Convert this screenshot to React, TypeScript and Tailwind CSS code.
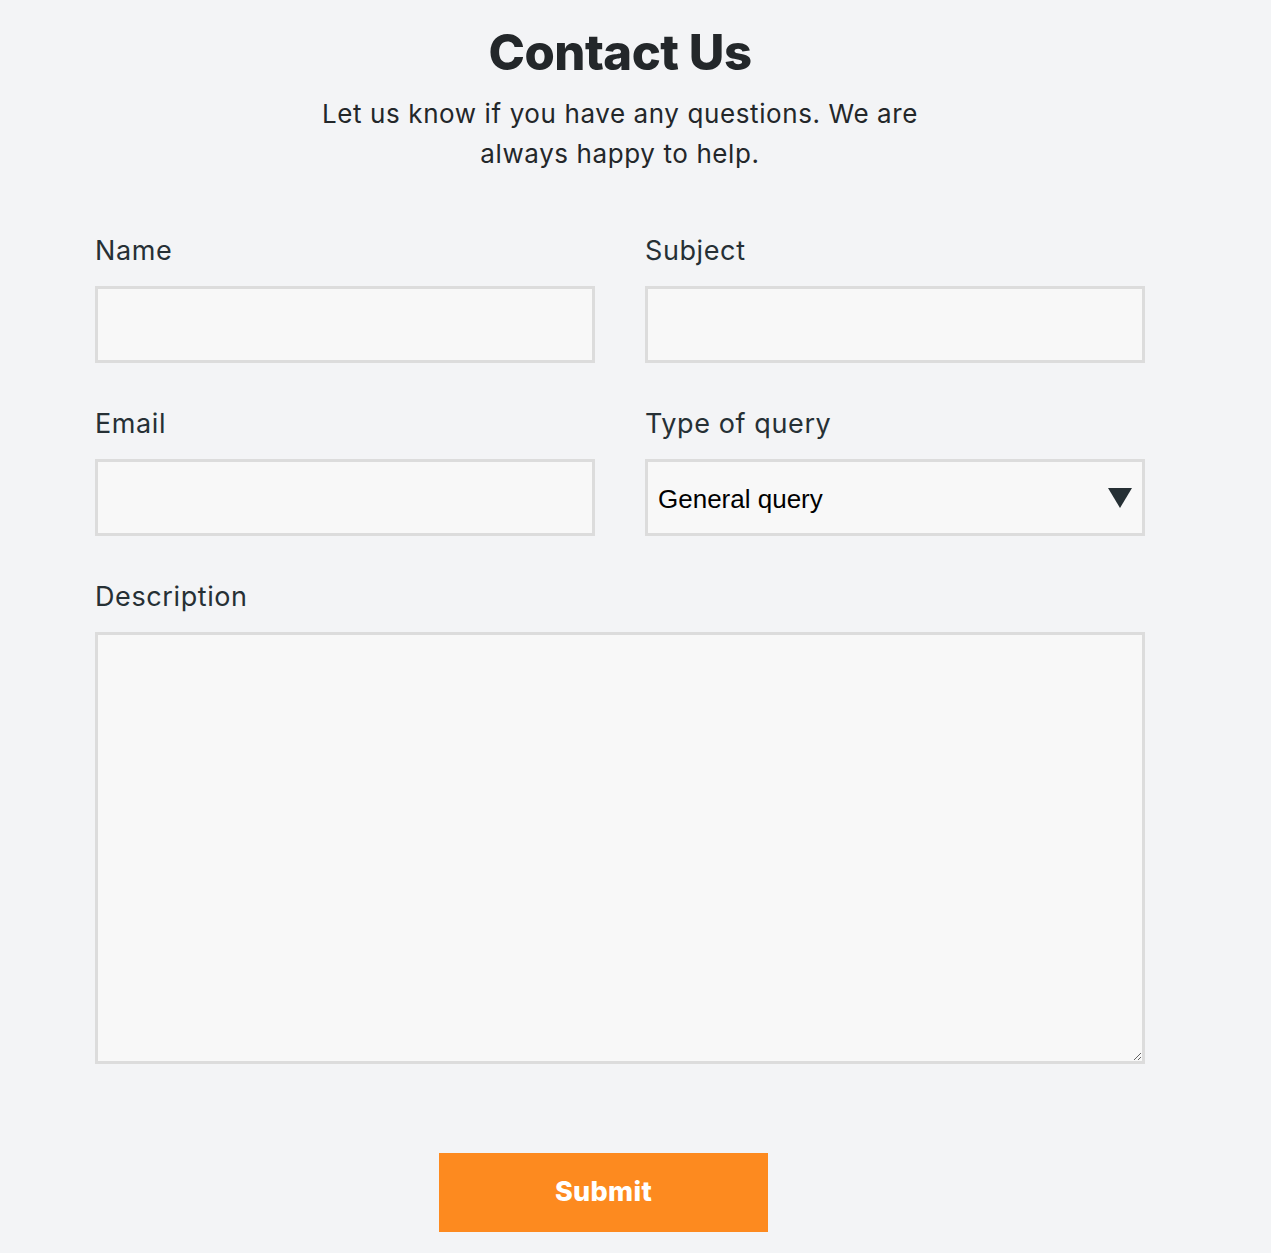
import { useState } from "react";

const QUERY_TYPES = ["General query", "Support", "Billing", "Feedback"];

function Field({ label, children }: { label: string; children: React.ReactNode }) {
  return (
    <div className="flex flex-col">
      <label className="text-[27px] leading-[36px] tracking-[0.6px] text-[#263035] mb-[17px]">{label}</label>
      {children}
    </div>
  );
}

const inputCls =
  "w-full h-[77px] bg-[#f8f8f8] border-[3px] border-[#dcdcdc] outline-none px-3 text-[24px] text-black";

export default function App() {
  const [query, setQuery] = useState(QUERY_TYPES[0]);

  return (
    <div
      className="min-h-[1253px] bg-[#f3f4f6] text-[#1f2326]"
      style={{ fontFamily: "Inter, 'Noto Sans', sans-serif" }}
    >
      <div className="w-[1050px] ml-[95px] pt-[24px]">
        {/* Heading */}
        <h1 className="text-center text-[49px] leading-[58px] font-extrabold tracking-[-0.5px] text-[#23272a]">
          Contact Us
        </h1>
        <p className="mx-auto mt-[12px] w-[640px] text-center text-[26px] leading-[40px] tracking-[0.6px] text-[#23272a]">
          Let us know if you have any questions. We are always happy to help.
        </p>

        {/* Form */}
        <form className="mt-[59px]" onSubmit={(e) => e.preventDefault()}>
          <div className="grid grid-cols-2 gap-x-[50px] gap-y-[43px]">
            <Field label="Name">
              <input className={inputCls} />
            </Field>
            <Field label="Subject">
              <input className={inputCls} />
            </Field>
            <Field label="Email">
              <input className={inputCls} />
            </Field>
            <Field label="Type of query">
              <div className="relative">
                <select
                  value={query}
                  onChange={(e) => setQuery(e.target.value)}
                  className={inputCls + " appearance-none pl-[10px] text-[26px] pt-[3px]"}
                  style={{ fontFamily: "'Liberation Sans', Arial, sans-serif" }}
                >
                  {QUERY_TYPES.map((q) => (
                    <option key={q}>{q}</option>
                  ))}
                </select>
                <svg
                  className="pointer-events-none absolute right-[12px] top-[28px]"
                  width="26"
                  height="22"
                  viewBox="0 0 26 22"
                >
                  <path d="M1 1 L25 1 L13 21 Z" fill="#263035" />
                </svg>
              </div>
            </Field>
          </div>

          <div className="mt-[43px]">
            <Field label="Description">
              <textarea className="block w-full h-[432px] bg-[#f8f8f8] border-[3px] border-[#dcdcdc] outline-none p-3 text-[24px] resize-y" />
            </Field>
          </div>

          <button
            type="submit"
            className="block mt-[89px] ml-[344px] w-[329px] h-[79px] bg-[#fd8a1f] text-white text-[27px] font-extrabold tracking-[0.3px]"
          >
            Submit
          </button>
        </form>
      </div>
    </div>
  );
}
